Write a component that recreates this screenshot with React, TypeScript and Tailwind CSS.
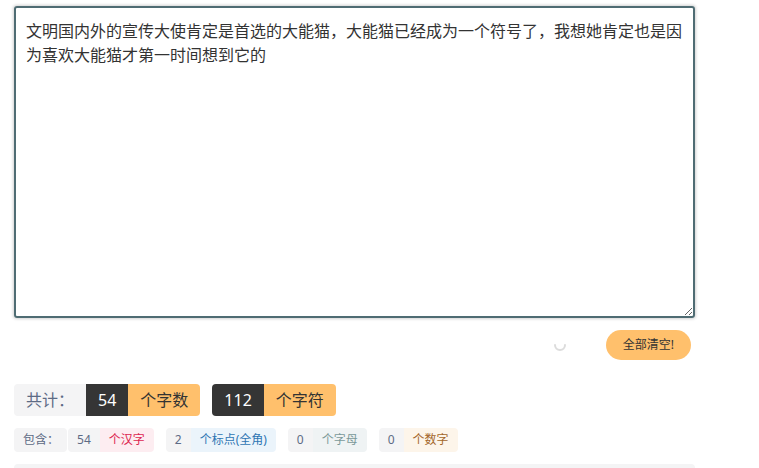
import { useState } from "react";

const FONT = { fontFamily: '"Noto Sans", "Noto Sans CJK SC", sans-serif' };

const TEXT =
  "文明国内外的宣传大使肯定是首选的大能猫，大能猫已经成为一个符号了，我想她肯定也是因为喜欢大能猫才第一时间想到它的";

type Part = { num: number; label: string; cls: string };

const parts: Part[] = [
  { num: 54, label: "个汉字", cls: "bg-[#fdedf1] text-[#dc2650]" },
  { num: 2, label: "个标点(全角)", cls: "bg-[#ebf4fb] text-[#2f76b3]" },
  { num: 0, label: "个字母", cls: "bg-[#eff3f4] text-[#7b9999]" },
  { num: 0, label: "个数字", cls: "bg-[#fdf5ea] text-[#a4672a]" },
];

export default function App() {
  const [text, setText] = useState(TEXT);

  return (
    <div className="w-[681px] ml-[14px] pt-[6px] text-[#333]" style={FONT}>
      <textarea
        value={text}
        onChange={(e) => setText(e.target.value)}
        className="block w-full h-[312px] border-2 border-[#4f6c73] rounded-[3px] px-[10px] py-[11px] text-[16px] leading-[24px] text-[#333] shadow-[0_0_3px_1px_rgba(0,0,0,0.18)] outline-none resize-y"
        style={FONT}
      />

      <div className="mt-[12px] h-[30px] flex items-center justify-end">
        <svg width="14" height="14" viewBox="0 0 14 14" className="mr-[39px] mt-[2px]">
          <path d="M2 6 A5 5 0 0 0 12 6" fill="none" stroke="#dcdcdc" strokeWidth="2" strokeLinecap="round" />
        </svg>
        <button
          onClick={() => setText("")}
          className="h-[30px] px-[17px] mr-[4px] rounded-full bg-[#ffc06c] text-[12px] text-[#333]"
        >
          全部清空!
        </button>
      </div>

      <div className="mt-[24px] flex items-center gap-[12px] text-[16px]">
        <div className="flex h-[32px]">
          <span className="flex items-center px-3 bg-[#f4f4f5] text-[#5d6b85] rounded-l-[4px]">共计：</span>
          <span className="flex items-center px-3 bg-[#353535] text-white">{54}</span>
          <span className="flex items-center px-3 bg-[#ffc06c] rounded-r-[4px]">个字数</span>
        </div>
        <div className="flex h-[32px]">
          <span className="flex items-center px-3 bg-[#353535] text-white rounded-l-[4px]">112</span>
          <span className="flex items-center px-3 bg-[#ffc06c] rounded-r-[4px]">个字符</span>
        </div>
      </div>

      <div className="mt-[12px] flex items-center text-[12px]">
        <span className="flex items-center h-[24px] pl-[9px] pr-[8px] mr-[1px] bg-[#f4f4f5] text-[#5d6b85] rounded-[4px]">
          包含：
        </span>
        <div className="flex gap-[12px]">
          {parts.map((p) => (
            <div key={p.label} className="flex h-[24px]">
              <span className="flex items-center px-[9px] bg-[#f4f4f5] text-[#5d6b85] rounded-l-[4px]">{p.num}</span>
              <span className={`flex items-center px-[9px] rounded-r-[4px] ${p.cls}`}>{p.label}</span>
            </div>
          ))}
        </div>
      </div>

      <div className="mt-[12px] h-[40px] bg-[#f4f4f5] rounded-t-[4px]" />
    </div>
  );
}
